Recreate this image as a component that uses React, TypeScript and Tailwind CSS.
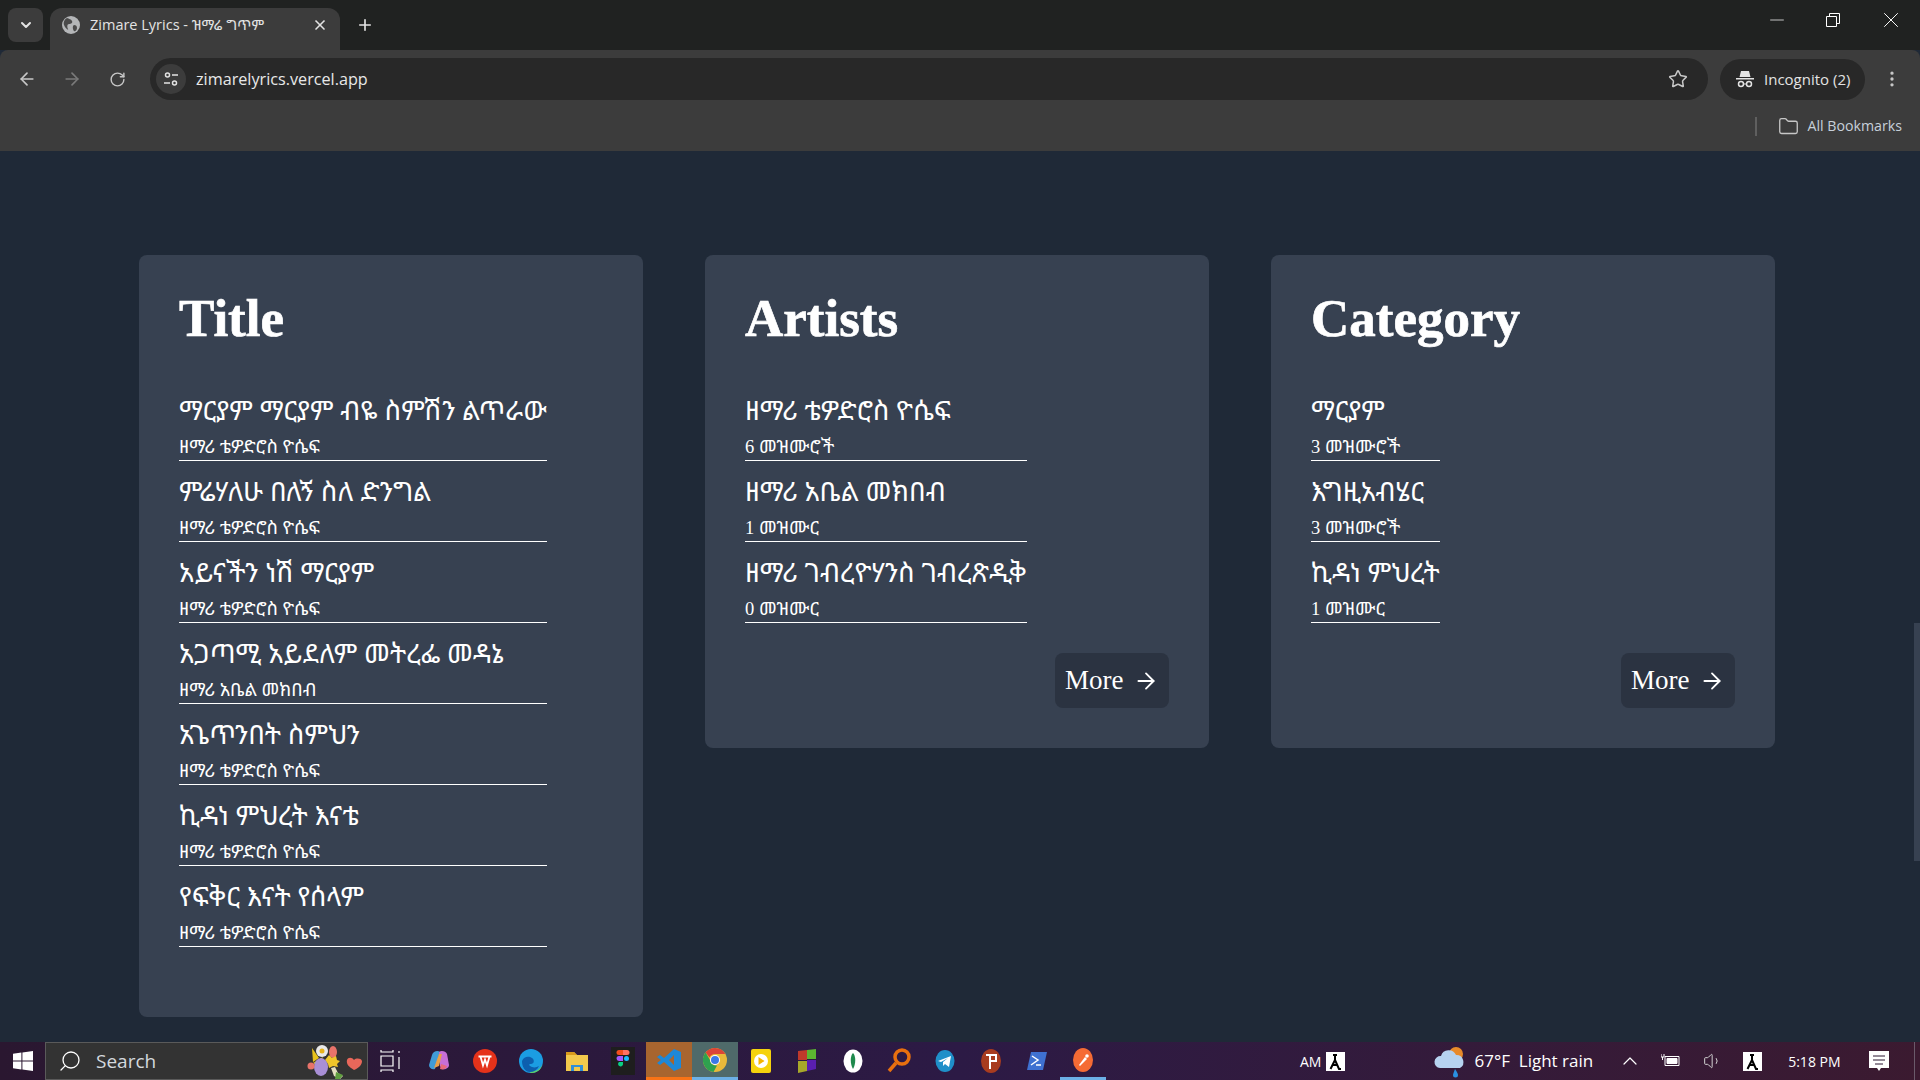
import { ArrowLeft, ArrowRight, ChevronDown, ChevronUp, Folder, MoreVertical, Plus, RotateCw, Search, Star, X, Minus, Volume1 } from "lucide-react";

const serif = "font-['Liberation_Serif','Noto_Sans_Ethiopic','DejaVu_Serif','DejaVu_Sans',serif]";
const ui = "font-['Open_Sans','Noto_Sans','Noto_Sans_Ethiopic','DejaVu_Sans',sans-serif]";

function Item({ title, sub }: { title: string; sub: string }) {
  return (
    <li className="mb-[15px] border-b border-white pb-[1px]">
      <div className="mb-[8px] h-[32px] text-[27px] leading-[32px] whitespace-nowrap">{title}</div>
      <div className="h-[24px] text-[18.500px] leading-[24px] whitespace-nowrap">{sub}</div>
    </li>
  );
}

function Card({ heading, items, more }: { heading: string; items: [string, string][]; more?: boolean }) {
  return (
    <section className="w-[504px] self-start rounded-lg bg-[#374151] p-[40px] text-white">
      <h2 className="mb-[53px] h-[47px] text-[53px] leading-[47px] font-bold [-webkit-text-stroke:0.7px_white]">{heading}</h2>
      <ul className="mb-[30px] w-fit">
        {items.map(([t, s]) => (
          <Item key={t} title={t} sub={s} />
        ))}
      </ul>
      {more && (
        <div className="flex justify-end">
          <button className="flex h-[55px] w-[114px] items-center gap-[10px] rounded-lg bg-[#2b3341] pl-[10px] text-[27px] text-white">
            More <ArrowRight size={26} strokeWidth={1.700} />
          </button>
        </div>
      )}
    </section>
  );
}

const Z = "ዘማሪ ቴዎድሮስ ዮሴፍ";

function WinLogo({ size = 20 }: { size?: number }) {
  return (
    <svg width={size} height={size} viewBox="0 0 20 20" fill="#fff">
      <path d="M0 2.800 8.400 1.600v7.900H0zM9.400 1.500 20 0v9.500H9.400zM0 10.500h8.400v7.900L0 17.200zM9.400 10.500H20V20L9.400 18.500z" />
    </svg>
  );
}

function TaskIcons() {
  const cells = [
    <svg key="tv" width="24" height="24" viewBox="0 0 24 24" fill="none" stroke="#fff" strokeWidth="1.200"><path d="M1 1v2h12V1M1 23v-2h12v2M1 7h12v10H1zM19 2v2M19 8v12" /></svg>,
    <svg key="cp" width="24" height="24" viewBox="0 0 24 24"><path d="M5 6c1-4 6-5 8-3l-5 17c-3 1-6-1-6-4z" fill="#3f9bd8" /><path d="M12 3c2-2 7-1 8 2l2 11c0 3-4 5-7 4l-2-3z" fill="#c86fd6" /><path d="M7 19 12 5l3 0-3 12z" fill="#e8a04a" /><path d="M13 20c3 1 6 0 7-3l-6-2z" fill="#e86a7a" /></svg>,
    <svg key="wp" width="24" height="24" viewBox="0 0 24 24"><circle cx="12" cy="12" r="12" fill="#e5321a" /><path d="M5.500 7.500h13M7.500 7.500l2.500 9 2-6 2 6 2.500-9" fill="none" stroke="#fff" strokeWidth="1.800" /></svg>,
    <svg key="ed" width="24" height="24" viewBox="0 0 24 24"><circle cx="12" cy="12" r="12" fill="#1b9de2" /><path d="M24 12c0 7-5 12-11 12-3 0-2-2 0-2 4 0 7-1 8-3 1-1 3-3 3-7z" fill="#5fd068" /><path d="M3 12c2-5 7-5 10-3 3 2 2 6-1 6s-2 2 1 3c3 1 5 0 7-1-2 4-5 6-9 6-5 0-8-5-8-11z" fill="#0d5fae" /></svg>,
    <svg key="fl" width="24" height="24" viewBox="0 0 24 24"><path d="M1 3h8l3 3h11v16H1z" fill="#f2c94c" /><path d="M1 3h8l3 3H1z" fill="#d99b1c" /><path d="M6 16h12v6H6z" fill="#2f8fd8" /><path d="M9 18h6v4H9z" fill="#f2c94c" /></svg>,
    <svg key="fg" width="24" height="28" viewBox="0 0 24 28"><rect width="24" height="28" fill="#1e1e1e" /><path d="M8 3h4v5H8a2.500 2.500 0 0 1 0-5z" fill="#f24e1e" /><path d="M12 3h4a2.500 2.500 0 0 1 0 5h-4z" fill="#ff7262" /><path d="M8 9h4v5H8a2.500 2.500 0 0 1 0-5z" fill="#a259ff" /><circle cx="15.500" cy="11.500" r="2.500" fill="#1abcfe" /><path d="M8 15h4v2.500a2.500 2.500 0 1 1-4-2.500z" fill="#0acf83" /></svg>,
  ];
  const after = [
    <svg key="y" width="20" height="24" viewBox="0 0 20 24"><rect width="20" height="24" rx="2" fill="#f5d20d" /><circle cx="10" cy="12" r="7" fill="#fff" /><path d="m7.500 8 6 4-6 4z" fill="#f5b400" /></svg>,
    <svg key="g" width="18" height="24" viewBox="0 0 18 24"><path d="M0 2 9 1v10H0z" fill="#c0392b" /><path d="M9 1l9-1v10H9z" fill="#5cb531" /><path d="M0 12h9v10l-9 2z" fill="#a8a82a" /><path d="M9 11h9v9l-9 2z" fill="#5a1fb0" /></svg>,
    <svg key="m" width="20" height="24" viewBox="0 0 20 24"><ellipse cx="10" cy="12" rx="9.500" ry="11.500" fill="#fff" /><path d="M10 4c3 3 3 11 0 16-3-5-3-13 0-16z" fill="#1f8a4d" /></svg>,
    <svg key="o" width="24" height="26" viewBox="0 0 24 26" fill="none" stroke="#e8700f" strokeWidth="3.500"><circle cx="15" cy="9" r="7" /><path d="m9 15-7 8" /></svg>,
    <svg key="t" width="20" height="22" viewBox="0 0 20 22"><ellipse cx="10" cy="11" rx="9.500" ry="11" fill="#1f8fc9" /><path d="M3 11 16 6l-2 11-4-3-2 2v-4l5-4-7 4z" fill="#fff" /></svg>,
    <svg key="p" width="20" height="24" viewBox="0 0 20 24"><ellipse cx="10" cy="12" rx="10" ry="12" fill="#a83c1f" /><path d="M5 5h11v8h-6v7H8V7H5zM10 7v4h4V7z" fill="#fff" /></svg>,
    <svg key="ps" width="20" height="20" viewBox="0 0 20 20"><path d="M4 1h16l-4 18H0z" fill="#3f71d1" /><path d="m5 5 6 4-7 5M9 14h5" fill="none" stroke="#fff" strokeWidth="1.500" /></svg>,
    <svg key="pm" width="20" height="24" viewBox="0 0 20 24"><ellipse cx="10" cy="12" rx="10" ry="12" fill="#f56b34" /><path d="m6 17 6-8 2 2-7 7z" fill="#fff" /><circle cx="14" cy="8" r="1.800" fill="#fff" /></svg>,
  ];
  return (
    <div className="flex h-full items-center">
      <div className="flex h-full w-[48px] items-center justify-center">{cells[0]}</div>
      {cells.slice(1).map((c, i) => (
        <div key={i} className="flex h-full w-[46px] items-center justify-center">{c}</div>
      ))}
      <div className="flex h-full w-[46px] items-center justify-center border-b-[3px] border-[#f97316] bg-[#a8652f]">
        <svg width="24" height="24" viewBox="0 0 24 24"><path d="M17 1 24 4v16l-7 3L7 14l-4 3-3-2 4-3-4-3 3-2 4 3zM17 7l-5 5 5 5z" fill="#1e88d8" /></svg>
      </div>
      <div className="flex h-full w-[46px] items-center justify-center border-b-[3px] border-[#6cb0e6] bg-[#4f6a6a]">
        <svg width="24" height="24" viewBox="0 0 24 24"><circle cx="12" cy="12" r="12" fill="#e8b93a" /><path d="M12 0a12 12 0 0 1 10.400 6H12a6 6 0 0 0-5.500 3.500L2.600 4.600A12 12 0 0 1 12 0z" fill="#dc4437" /><path d="M2.600 4.600 7 12a6 6 0 0 0 7 5.500L10.500 24A12 12 0 0 1 2.600 4.600z" fill="#2fa14f" /><circle cx="12" cy="12" r="5" fill="#fff" /><circle cx="12" cy="12" r="4" fill="#3b78e7" /></svg>
      </div>
      {after.map((c, i) => (
        <div key={i} className={`flex h-full w-[46px] items-center justify-center ${i === 7 ? "border-b-[3px] border-[#6cb0e6]" : ""}`}>{c}</div>
      ))}
    </div>
  );
}

function LangBox() {
  return (
    <svg width="19" height="19" viewBox="0 0 19 19" className="block"><rect width="19" height="19" fill="#fff" /><path d="M7 3h4M9 3v5M9 8 4.500 17M9 8l4 9h2M7 13h5" stroke="#000" strokeWidth="2" fill="none" /></svg>
  );
}

export default function App() {
  const titles: [string, string][] = [
    ["ማርያም ማርያም ብዬ ስምሽን ልጥራው", Z],
    ["ምሬሃለሁ በለኝ ስለ ድንግል", Z],
    ["አይናችን ነሽ ማርያም", Z],
    ["አጋጣሚ አይደለም መትረፌ መዳኔ", "ዘማሪ አቤል መክበብ"],
    ["አጌጥንበት ስምህን", Z],
    ["ኪዳነ ምህረት እናቴ", Z],
    ["የፍቅር እናት የሰላም", Z],
  ];
  const artists: [string, string][] = [
    ["ዘማሪ ቴዎድሮስ ዮሴፍ", "6 መዝሙሮች"],
    ["ዘማሪ አቤል መክበብ", "1 መዝሙር"],
    ["ዘማሪ ገብረዮሃንስ ገብረጽዲቅ", "0 መዝሙር"],
  ];
  const cats: [string, string][] = [
    ["ማርያም", "3 መዝሙሮች"],
    ["እግዚአብሄር", "3 መዝሙሮች"],
    ["ኪዳነ ምህረት", "1 መዝሙር"],
  ];
  return (
    <div className={`flex h-screen flex-col overflow-hidden bg-[#1f2937] ${ui}`}>
      {/* tab strip */}
      <header className="flex h-[50px] shrink-0 items-end bg-[#202221] text-[#e3e3e3]">
        <div className="mb-[8px] ml-[8px] flex h-[34px] w-[35px] items-center justify-center rounded-lg bg-[#3c3c3c]">
          <ChevronDown size={16} strokeWidth={3} />
        </div>
        <div className="ml-[7px] flex h-[42px] w-[290px] items-center rounded-t-xl bg-[#3c3c3c] pr-[12px] pb-[8px] pl-[12px]">
          <svg width="18" height="18" viewBox="0 0 18 18" className="shrink-0"><circle cx="9" cy="9" r="9" fill="#b4b6b8" /><path d="M5 2c2 1 4 1 5 3s-1 3-3 3-2 3-1 5-3-1-4-4 1-6 3-7zM12 9c2 0 3 1 3 3s-2 4-3 3-2-5 0-6z" fill="#4a4a4a" /></svg>
          <span className="ml-[10px] flex-1 text-[14.500px] whitespace-nowrap">Zimare Lyrics - ዝማሬ ግጥም</span>
          <X size={16} strokeWidth={2.500} />
        </div>
        <div className="mb-[16px] ml-[16px]">
          <Plus size={18} strokeWidth={2.200} />
        </div>
        <div className="flex-1" />
        <div className="mb-[17px] flex items-center text-white">
          <span className="flex w-[55px] justify-center"><Minus size={22} strokeWidth={0.800} /></span>
          <span className="flex w-[58px] justify-center">
            <svg width="14" height="14" viewBox="0 0 14 14" fill="none" stroke="#fff"><path d="M.500 3.500h10v10H.500zM3.500 3V.500h10v10H11" /></svg>
          </span>
          <span className="flex w-[58px] justify-center"><X size={26} strokeWidth={0.900} /></span>
        </div>
      </header>
      {/* toolbar */}
      <div className="flex h-[51px] shrink-0 items-center rounded-t-lg bg-[#3c3c3c] pt-[8px] pb-[1px] text-[#c7c7c7]">
        <ArrowLeft size={20} className="ml-[17px]" />
        <ArrowRight size={20} className="ml-[25px] text-[#7a7a7a]" />
        <RotateCw size={17} className="ml-[27px]" />
        <div className="ml-[24px] flex h-[42px] w-[1558px] items-center rounded-full bg-[#282828] pr-[20px]">
          <span className="ml-[6px] flex h-[30px] w-[30px] items-center justify-center rounded-full bg-[#3c3c3c]">
            <svg width="16" height="16" viewBox="0 0 16 16" fill="none" stroke="#e3e3e3" strokeWidth="1.500"><circle cx="4.500" cy="4" r="2" /><path d="M9 4h6M1 12h6" /><circle cx="11.500" cy="12" r="2" /></svg>
          </span>
          <span className="ml-[10px] flex-1 text-[16.200px] text-[#e8e8e8]">zimarelyrics.vercel.app</span>
          <Star size={20} strokeWidth={1.800} />
        </div>
        <div className="ml-[12px] flex h-[41px] w-[145px] items-center rounded-full bg-[#282828] pl-[16px] text-[#e3e3e3]">
          <svg width="18" height="18" viewBox="0 0 18 18" fill="#e3e3e3" className="shrink-0"><path d="M5 1h8l1.500 6h-11zM0 8h18v1.500H0z" /><circle cx="5" cy="14" r="2.500" fill="none" stroke="#e3e3e3" strokeWidth="1.500" /><circle cx="13" cy="14" r="2.500" fill="none" stroke="#e3e3e3" strokeWidth="1.500" /><path d="M7 13.500h4v1H7z" /></svg>
          <span className="ml-[10px] text-[15px] whitespace-nowrap">Incognito (2)</span>
        </div>
        <MoreVertical size={20} className="ml-[17px]" />
      </div>
      {/* bookmarks */}
      <div className="flex h-[50px] shrink-0 items-center justify-end bg-[#3c3c3c] pr-[18px] text-[#c7c7c7]">
        <span className="mr-[21px] h-[19px] w-[2px] bg-[#5f5f5f]" />
        <Folder size={21} strokeWidth={1.500} />
        <span className="ml-[8px] text-[14.200px] leading-none text-[#c7d0da]">All Bookmarks</span>
      </div>
      {/* page */}
      <main className={`flex min-h-0 flex-1 overflow-hidden ${serif}`}>
        <div className="flex flex-1 items-start gap-[62px] pt-[104px] pl-[139px]">
          <Card heading="Title" items={titles} />
          <Card heading="Artists" items={artists} more />
          <Card heading="Category" items={cats} more />
        </div>
        <div className="flex w-[6px] shrink-0 flex-col pt-[472px]">
          <div className="h-[238px] bg-[#374151]" />
        </div>
      </main>
      {/* taskbar */}
      <footer className="flex h-[38px] shrink-0 items-center bg-gradient-to-r from-[#2a1730] via-[#2c1a45] to-[#3b1a30] text-white">
        <div className="flex w-[45px] justify-center"><WinLogo /></div>
        <div className="flex h-full w-[323px] items-center border border-[#5a5a5a] bg-[#333333] pl-[12px]">
          <Search size={24} strokeWidth={1.300} className="-scale-x-100" />
          <span className="ml-[14px] flex-1 text-[19px] text-[#d4d9de]">Search</span>
          <svg width="58" height="36" viewBox="0 0 58 36" className="mr-[4px] self-end">
            <path d="M7 5l7 10-6 4zM8 20l10-6-4 9z" fill="#e8c21c" />
            <circle cx="17" cy="8" r="6" fill="#e9e9e9" /><circle cx="17" cy="8" r="2.500" fill="#e8b21c" />
            <ellipse cx="28" cy="9" rx="4" ry="6" fill="#e8736a" />
            <path d="M20 17l4-5 3 3 4-2 1 4 3 1-3 3 1 3-5-1-4 2-1-4z" fill="#efc52a" />
            <ellipse cx="16" cy="24" rx="7" ry="9" fill="#a98fd6" />
            <circle cx="6" cy="23" r="3.500" fill="#e8736a" />
            <path d="M26 25l4-1 3 6 5 3-3 3-6-3z" fill="#e4e0c0" /><path d="M31 29l7 3-3 4h-5z" fill="#5f9f3f" />
            <path d="M49 27c-5-3-8-6-7-10 1-3 5-3 7 0 2-2 7-2 8 1 0 4-3 7-8 9z" fill="#e8675a" />
          </svg>
        </div>
        <TaskIcons />
        <span className="ml-[194px] text-[14px]">AM</span>
        <span className="ml-[5px]"><LangBox /></span>
        <span className="ml-[89px]">
          <svg width="32" height="36" viewBox="0 0 32 36"><circle cx="22" cy="11" r="7" fill="#e88a2a" /><path d="M6 25a6 6 0 0 1 1-12 8 8 0 0 1 15-1 7 7 0 0 1 4 13z" fill="#b6d3f0" /><path d="M21 26c2 3 3 5 3 6a2.500 2.500 0 0 1-5 0c0-1 1-3 2-6z" fill="#2a8fe0" /></svg>
        </span>
        <span className="ml-[8px] text-[17px] whitespace-nowrap">67°F&nbsp; Light rain</span>
        <ChevronUp size={24} strokeWidth={1.200} className="ml-[25px]" />
        <svg width="20" height="14" viewBox="0 0 20 14" className="ml-[19px]" fill="none" stroke="#fff"><path d="M4 2.500h14v9H4z" /><path d="M6 4.500h10v5H6z" fill="#fff" /><path d="M0 0v3h3V0M1.500 3v3" /></svg>
        <Volume1 size={20} strokeWidth={1.200} className="ml-[22px] text-[#d4d4d4]" />
        <span className="ml-[20px]"><LangBox /></span>
        <span className="ml-[26px] text-[14px] whitespace-nowrap">5:18 PM</span>
        <svg width="20" height="20" viewBox="0 0 20 20" className="ml-[28px]"><path d="M0 0h20v17h-8l-2 3-2-3H0z" fill="#fff" /><path d="M4 5h12M4 9h12M6 13h8" stroke="#2a1730" /></svg>
        <span className="mr-[5px] ml-auto h-full w-[1px] bg-[#6a5a6a]" />
      </footer>
    </div>
  );
}
